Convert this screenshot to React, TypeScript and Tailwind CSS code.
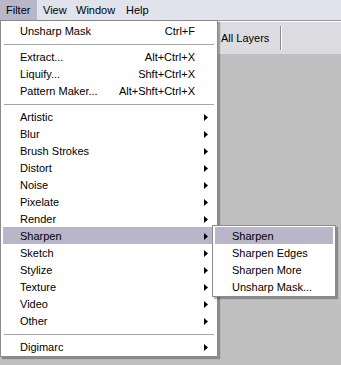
import React from "react";

const Arrow = () => (
  <svg width="4" height="7" viewBox="0 0 4 7" className="block">
    <polygon points="0,0 4,3.5 0,7" fill="#000" />
  </svg>
);

type Item =
  | { sep: true }
  | { label: string; shortcut?: string; sub?: boolean; active?: boolean };

const items: Item[] = [
  { label: "Unsharp Mask", shortcut: "Ctrl+F" },
  { sep: true },
  { label: "Extract...", shortcut: "Alt+Ctrl+X" },
  { label: "Liquify...", shortcut: "Shft+Ctrl+X" },
  { label: "Pattern Maker...", shortcut: "Alt+Shft+Ctrl+X" },
  { sep: true },
  { label: "Artistic", sub: true },
  { label: "Blur", sub: true },
  { label: "Brush Strokes", sub: true },
  { label: "Distort", sub: true },
  { label: "Noise", sub: true },
  { label: "Pixelate", sub: true },
  { label: "Render", sub: true },
  { label: "Sharpen", sub: true, active: true },
  { label: "Sketch", sub: true },
  { label: "Stylize", sub: true },
  { label: "Texture", sub: true },
  { label: "Video", sub: true },
  { label: "Other", sub: true },
  { sep: true },
  { label: "Digimarc", sub: true },
];

const subItems = ["Sharpen", "Sharpen Edges", "Sharpen More", "Unsharp Mask..."];

export default function App() {
  return (
    <div className="relative w-[341px] h-[365px] overflow-hidden bg-[#c0c0c0] text-[11px] leading-none text-black font-['Tahoma','Liberation_Sans',sans-serif]">
      {/* menu bar */}
      <div className="flex h-[20px] items-stretch bg-[#e0e3eb]">
        <div className="flex items-center bg-[#b8b6c8] pl-[6px] w-[37px] pt-px">Filter</div>
        <div className="flex items-center pl-[6px] w-[33px] pt-px">View</div>
        <div className="flex items-center pl-[6px] w-[50px] pt-px">Window</div>
        <div className="flex items-center pl-[6px] pt-px">Help</div>
      </div>
      <div className="h-px bg-[#9a9a9e]" />
      <div className="h-px bg-[#ffffff]" />
      {/* toolbar */}
      <div className="flex h-[32px] items-center bg-[#dcdbdf] pl-[221px]">
        <span>All Layers</span>
        <div className="ml-[11px] flex h-[24px]">
          <div className="w-px bg-[#8c8a94]" />
          <div className="w-px bg-[#ffffff]" />
        </div>
      </div>

      {/* Filter menu */}
      <div className="absolute left-0 top-[20px] w-[218px] border border-[#8a8a8a] bg-white py-[1px] px-[2px] shadow-[2px_2px_1px_rgba(0,0,0,0.28)]">
        {items.map((it, i) =>
          "sep" in it ? (
            <div key={i} className="flex h-[9px] items-center px-[1px] pt-px">
              <div className="h-px w-full bg-[#a6a6a6]" />
            </div>
          ) : (
            <div
              key={i}
              className={`flex h-[17px] items-center pl-[17px] pr-[7px] pt-px ${it.active ? "bg-[#b8b6c8]" : ""}`}
            >
              <span className="flex-1 whitespace-nowrap">{it.label}</span>
              {it.shortcut && <span className="mr-[13px] whitespace-nowrap">{it.shortcut}</span>}
              {it.sub && <Arrow />}
            </div>
          )
        )}
      </div>

      {/* Sharpen submenu */}
      <div className="absolute left-[212px] top-[225px] w-[124px] border border-[#8a8a8a] bg-white py-[1px] px-[2px] shadow-[2px_2px_1px_rgba(0,0,0,0.28)]">
        {subItems.map((s, i) => (
          <div
            key={s}
            className={`flex h-[17px] items-center pl-[17px] pt-px ${i === 0 ? "bg-[#b8b6c8]" : ""}`}
          >
            {s}
          </div>
        ))}
      </div>
    </div>
  );
}
